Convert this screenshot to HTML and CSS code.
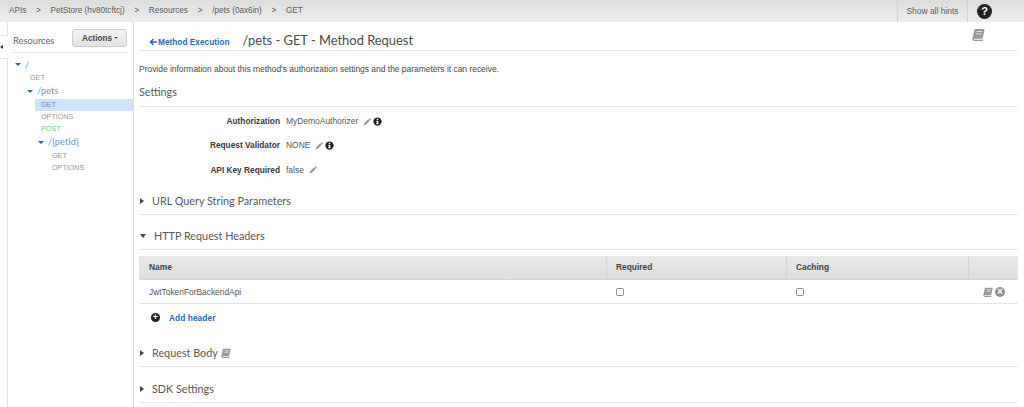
FILE: index.html
```html
<!DOCTYPE html>
<html lang="en">
<head>
<meta charset="utf-8">
<title>Method Request</title>
<link rel="stylesheet" href="styles.css">
</head>
<body>
<svg class="defs" width="0" height="0" aria-hidden="true">
  <symbol id="book" viewBox="0 0 12 12"><path d="M3.2 1h7.6c.6 0 .9.4.7 1L9.8 9.2c-.1.5-.5.8-1 .8H2.3c-.7 0-.8.9 0 .9h7.2l.5-.4.4.4-.4.9c-.1.1-.3.2-.5.2H2C.8 11.600 .1 10.800.4 9.700L2.200 1.900C2.300 1.300 2.700 1 3.200 1zM4.500 3l-.2.800h5l.2-.8zM4 5l-.2.800h5L9 5z" fill-rule="evenodd"/></symbol>
  <symbol id="pencil" viewBox="0 0 12 12"><path d="M8.600 1.200l2.200 2.200-1.100 1.100-2.200-2.200zM6.900 2.900l2.200 2.200-5.300 5.300-2.900.7.700-2.900z"/></symbol>
  <symbol id="info" viewBox="0 0 12 12"><path fill-rule="evenodd" d="M6 .5a5.500 5.500 0 1 1 0 11 5.500 5.500 0 0 1 0-11zM5 2.300v1.700h2V2.300zM4.400 5v1.100H5v2.300h-.6v1.100h3.200V8.400H7V5z"/></symbol>
  <symbol id="left" viewBox="0 0 8 8"><path d="M4 .6l1 1L3.300 3.200H8v1.600H3.300L5 6.400l-1 1L.4 4z"/></symbol>
</svg>
<header class="topbar">
  <nav class="crumbs">
    <span>APIs</span><i>&gt;</i><span>PetStore (hv80tcftcj)</span><i>&gt;</i><span>Resources</span><i>&gt;</i><span>/pets (0ax6in)</span><i>&gt;</i><span>GET</span>
  </nav>
  <div class="hints">Show all hints</div>
  <div class="help"><span class="help-mark">?</span></div>
</header>
<div class="page">
  <aside class="rail">
    <div class="rail-top"></div>
    <div class="rail-tab"><span class="rail-arrow"></span></div>
    <div class="rail-bottom"></div>
  </aside>
  <section class="side">
    <div class="side-head">
      <span class="side-title">Resources</span>
      <button class="actions">Actions<span class="caret"></span></button>
    </div>
    <ul class="tree">
      <li class="res l0"><span class="tri"></span>/</li>
      <li class="method get m0">GET</li>
      <li class="res l1"><span class="tri"></span>/pets</li>
      <li class="method get m1 sel">GET</li>
      <li class="method opt m1">OPTIONS</li>
      <li class="method post m1">POST</li>
      <li class="res l2"><span class="tri"></span>/{petId}</li>
      <li class="method get m2">GET</li>
      <li class="method opt m2">OPTIONS</li>
    </ul>
  </section>
  <main class="main">
    <div class="title-row">
      <a class="back"><svg class="back-arrow"><use href="#left"/></svg>Method Execution</a>
      <h1>/pets - GET - Method Request</h1>
      <svg class="ico title-book"><use href="#book"/></svg>
    </div>
    <p class="desc">Provide information about this method's authorization settings and the parameters it can receive.</p>
    <h2 class="sec settings">Settings</h2>
    <dl class="props">
      <div class="prop"><dt>Authorization</dt><dd>MyDemoAuthorizer<svg class="ico pen"><use href="#pencil"/></svg><svg class="ico inf"><use href="#info"/></svg></dd></div>
      <div class="prop"><dt>Request Validator</dt><dd>NONE<svg class="ico pen"><use href="#pencil"/></svg><svg class="ico inf"><use href="#info"/></svg></dd></div>
      <div class="prop"><dt>API Key Required</dt><dd>false<svg class="ico pen"><use href="#pencil"/></svg></dd></div>
    </dl>
    <h2 class="sec closed url"><span class="tri-r"></span>URL Query String Parameters</h2>
    <h2 class="sec open"><span class="tri-d"></span>HTTP Request Headers</h2>
    <div class="table">
      <div class="tr th"><div class="c1">Name</div><div class="c2">Required</div><div class="c3">Caching</div><div class="c4"></div></div>
      <div class="tr td">
        <div class="c1">JwtTokenForBackendApi</div>
        <div class="c2"><span class="check"></span></div>
        <div class="c3"><span class="check"></span></div>
        <div class="c4"><svg class="ico row-book"><use href="#book"/></svg><span class="remove">&#215;</span></div>
      </div>
    </div>
    <div class="add"><span class="plus">+</span><a>Add header</a></div>
    <h2 class="sec closed body"><span class="tri-r"></span>Request Body<svg class="ico sec-book"><use href="#book"/></svg></h2>
    <h2 class="sec closed sdk"><span class="tri-r"></span>SDK Settings</h2>
  </main>
</div>
</body>
</html>
```
FILE: styles.css
```css
* { box-sizing: border-box; }
html, body { margin: 0; height: 407px; overflow: hidden; }
body { background: #fff; color: #444; font: 8.450px/12px "Liberation Sans", Arial, sans-serif; }
.defs { position: absolute; }
.ico { fill: #999; display: inline-block; }

.topbar { height: 22px; display: flex; align-items: stretch; background: linear-gradient(#dedede, #ececec); }
.crumbs { flex: 1; display: flex; align-items: center; padding-left: 9px; color: #5a5a5a; font-size: 8.200px; }
.crumbs i { font-style: normal; margin: 0 9.700px; }
.hints { width: 70px; border-left: 1px solid #d2d2d2; display: flex; align-items: center; justify-content: center; color: #5a5a5a; }
.help { width: 57px; border-left: 1px solid #d2d2d2; padding-left: 9px; display: flex; align-items: center; }
.help-mark { width: 15px; height: 15px; border-radius: 50%; background: #222; color: #fff; font: bold 11px/15px "Liberation Sans", sans-serif; text-align: center; }

.page { display: flex; height: 385px; }
.rail { width: 13px; display: flex; flex-direction: column; flex: none; }
.rail-top { height: 14px; width: 8px; border: solid #e3e3e3; border-width: 0 1px 1px 0; }
.rail-tab { height: 22px; width: 8px; display: flex; align-items: center; }
.rail-arrow { border: 2.500px solid transparent; border-left: 0; border-right: 3px solid #333; }
.rail-bottom { flex: 1; width: 8px; border: solid #e3e3e3; border-width: 1px 1px 0 0; }

.side { width: 121px; flex: none; border-right: 1px solid #dcdcdc; }
.side-head { margin-right: 6px; height: 31px; padding-top: 7px; border-bottom: 1px solid #e2e2e2; display: flex; justify-content: space-between; align-items: flex-start; }
.side-title { font: 9.300px/16px Lato, sans-serif; color: #666; margin-top: 4px; }
.actions { width: 55px; height: 18px; padding: 0 0 0 1px; border: 1px solid #ccc; border-radius: 3px; background: linear-gradient(#f3f3f3, #e2e2e2); color: #444; font: bold 8.200px "Liberation Sans", sans-serif; display: flex; align-items: center; justify-content: center; gap: 2px; }
.caret { border: 2.500px solid transparent; border-top-color: #555; border-bottom: 0; }
.tree { list-style: none; margin: 4.400px 0 0; padding: 0; }
.tree li { display: flex; align-items: center; }
.tri { border: 3px solid transparent; border-top: 3.500px solid #1f5fbf; border-bottom: 0; margin-right: 4px; }
.res { height: 14.500px; font: 9.300px/14px Lato, sans-serif; color: #6a94d8; }
.l0 { padding-left: 2px; }
.l1 { padding-left: 14px; }
.l2 { padding-left: 25px; }
.method { height: 12.200px; font-size: 7.200px; }
.get { color: #7099dc; }
.opt { color: #a3978c; }
.post { color: #63cf80; }
.m0 { padding-left: 17px; }
.m1 { padding-left: 28px; }
.m2 { padding-left: 39px; }
.tree .sel { margin-left: 22px; padding-left: 6px; background: #cde3fa; color: #6b8fc0; }

.main { width: 879px; flex: none; margin-left: 5px; }
.title-row { height: 29px; border-bottom: 1px solid #e6e6e6; display: flex; align-items: flex-end; padding: 0 0 1px 10px; position: relative; }
.back { color: #2568b5; font: bold 8.300px/14px "Liberation Sans", sans-serif; margin-right: 13px; display: flex; align-items: center; }
.back-arrow { width: 8px; height: 8px; fill: #2568b5; margin-right: 1px; }
h1 { margin: 0; font: 400 12.900px/18px Lato, sans-serif; color: #484848; }
.title-book { position: absolute; right: 33px; top: 6px; width: 13px; height: 13px; }
.desc { margin: 12px 0 0; color: #484848; line-height: 12px; }
.sec { margin: 0; font: 400 10.800px/14px Lato, sans-serif; color: #585858; border-bottom: 1px solid #e4e4e4; display: flex; align-items: center; }
.settings { margin-top: 10px; height: 22px; padding-bottom: 8px; }
.closed, .open { height: 21px; padding-bottom: 6px; }
.url { margin-top: 6.100px; }
.open { margin-top: 14px; }
.tri-r { border: 3px solid transparent; border-left: 4px solid #444; border-right: 0; margin: 0 8px 0 1px; }
.tri-d { border: 3.500px solid transparent; border-top: 4px solid #444; border-bottom: 0; margin: 0 8px 0 1px; }
.props { margin: 0; padding-top: 8px; }
.prop { display: flex; height: 24.300px; align-items: flex-start; }
.prop dt { width: 141px; text-align: right; font-weight: bold; font-size: 8.300px; color: #383838; }
.prop dd { margin: 0 0 0 6px; display: flex; align-items: center; height: 12px; color: #555; }
.pen { width: 9px; height: 9px; margin-left: 5px; }
.inf { width: 9px; height: 9px; margin-left: 1px; }
.prop .inf { fill: #222; }
.table { margin-top: 6px; }
.tr { display: flex; }
.th { height: 24px; background: linear-gradient(#e8e8e8, #dedede); border-bottom: 1px solid #d3d3d3; font-weight: bold; font-size: 8.400px; color: #444; align-items: stretch; }
.th > div { display: flex; align-items: center; border-right: 1px solid #d2d2d2; }
.td { height: 24px; padding-top: 1px; border-bottom: 1px solid #e4e4e4; align-items: center; color: #555; font-size: 8.400px; }
.c1 { width: 468px; padding-left: 10px; }
.c2 { width: 180px; padding-left: 9px; }
.c3 { width: 182px; padding-left: 9px; }
.th > .c4 { border-right: 0; }
.c4 { flex: 1; }
.td .c4 { display: flex; justify-content: flex-end; align-items: center; padding-right: 13px; gap: 2px; }
.check { display: block; width: 8px; height: 8px; border: 1px solid #8a8a8a; border-radius: 1.500px; background: #fff; }
.row-book { width: 10px; height: 10px; }
.remove { width: 10px; height: 10px; border-radius: 50%; background: #8f8f8f; color: #fff; font: bold 10px/10px "Liberation Sans", sans-serif; text-align: center; }
.add { height: 27px; padding: 1px 0 0 12px; display: flex; align-items: center; }
.plus { width: 9px; height: 9px; border-radius: 50%; background: #222; color: #fff; font: bold 9px/9px "Liberation Sans", sans-serif; text-align: center; margin-right: 9px; }
.add a { color: #2568b5; font-weight: bold; }
.body { margin-top: 15px; }
.sec-book { width: 10px; height: 10px; margin-left: 3px; }
.sdk { margin-top: 15px; }
```
